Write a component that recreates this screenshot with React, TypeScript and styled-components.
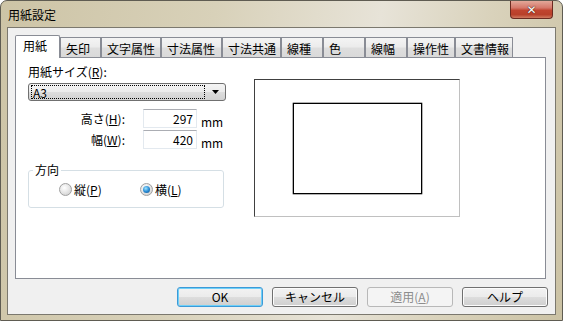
import React from 'react';
import styled, { createGlobalStyle } from 'styled-components';

const GlobalStyle = createGlobalStyle`
  html, body { margin: 0; padding: 0; background: #ffffff; }
  body {
    font-family: "Noto Sans CJK JP", "Noto Sans", sans-serif;
    font-size: 12px;
    color: #000;
  }
  * { box-sizing: border-box; }
`;

const Window = styled.div`
  width: 563px;
  height: 321px;
  display: flex;
  flex-direction: column;
  border: 1px solid #5f5c52;
  border-radius: 7px 7px 0 0;
  background: linear-gradient(100deg, #cdc4a6 0%, #d8d1b9 35%, #e7e3d8 62%, #d9d2bb 80%, #cbc2a4 100%);
  padding: 0 6px 5px 6px;
  overflow: hidden;
`;

const TitleBar = styled.div`
  height: 26px;
  flex: none;
  display: flex;
  align-items: flex-start;
`;

const TitleText = styled.div`
  margin-left: 1px;
  line-height: 28px;
  font-size: 12px;
  color: #000;
`;

const CloseButton = styled.div`
  margin-left: auto;
  margin-right: 3px;
  width: 43px;
  height: 18px;
  border: 1px solid #6b2a20;
  border-top: none;
  border-radius: 0 0 4px 4px;
  background: linear-gradient(180deg, #e3a899 0%, #d5786a 40%, #c0442f 55%, #b8402a 80%, #d07a60 100%);
  display: flex;
  align-items: center;
  justify-content: center;
  color: #fff;
  font-family: "DejaVu Sans", sans-serif;
  font-weight: bold;
  font-size: 12px;
  text-shadow: 0 0 1px #3a1a10, 0 0 1px #3a1a10;
`;

const Client = styled.div`
  flex: 1;
  display: flex;
  flex-direction: column;
  background: #f0f0f0;
  border: 1px solid #7b786e;
  padding: 7px 9px 7px 7px;
`;

const TabStrip = styled.div`
  height: 23px;
  display: flex;
  align-items: flex-end;
  margin-bottom: -1px;
  position: relative;
  z-index: 1;
`;

const Tab = styled.div<{ $w: number; $active?: boolean }>`
  width: ${(p) => p.$w}px;
  flex: none;
  border: 1px solid #898c95;
  border-bottom: none;
  white-space: nowrap;
  ${(p) =>
    p.$active
      ? `
    height: 23px;
    background: #ffffff;
    padding-left: 7px;
    line-height: 20px;
    border-radius: 2px 2px 0 0;
  `
      : `
    height: 20px;
    margin-bottom: 1px;
    background: linear-gradient(180deg, #f4f4f4 0%, #ececec 45%, #dedede 55%, #d9d9d9 100%);
    padding-left: 5px;
    padding-top: 1px;
    line-height: 19px;
  `}
`;

const Panel = styled.div`
  flex: 1;
  background: #ffffff;
  border: 1px solid #898c95;
  display: flex;
  padding: 7px 12px 0 12px;
`;

const LeftColumn = styled.div`
  width: 198px;
  display: flex;
  flex-direction: column;
`;

const FieldLabel = styled.div`
  line-height: 14px;
  height: 14px;
`;

const Select = styled.div`
  margin-top: 4px;
  height: 18px;
  border: 1px solid #707070;
  border-radius: 3px;
  background: linear-gradient(180deg, #f4f4f4 0%, #ebebeb 50%, #dddddd 51%, #d2d2d2 100%);
  display: flex;
  align-items: center;
  padding: 1px 0 1px 2px;
`;

const SelectValue = styled.div`
  flex: 1;
  height: 14px;
  line-height: 13px;
  border: 1px dotted #000;
  padding-left: 1px;
`;

const SelectArrow = styled.div`
  width: 20px;
  display: flex;
  justify-content: center;
  align-items: center;
`;

const DimRows = styled.div`
  margin-top: 8px;
  display: flex;
  flex-direction: column;
  gap: 2px;
`;

const DimRow = styled.div`
  height: 19px;
  display: flex;
  align-items: center;
`;

const DimLabel = styled.div`
  width: 97px;
  text-align: right;
  line-height: 14px;
`;

const NumInput = styled.div`
  margin-left: 18px;
  width: 54px;
  height: 19px;
  border: 1px solid #e3e9ef;
  border-top-color: #abadb3;
  background: #fff;
  text-align: right;
  padding-right: 3px;
  line-height: 17px;
`;

const Unit = styled.div`
  margin-left: 4px;
  align-self: flex-end;
  line-height: 14px;
  margin-bottom: -1px;
`;

const Group = styled.fieldset`
  margin: 14px 0 0 0;
  width: 196px;
  height: 45px;
  border: 1px solid #d5dfe5;
  border-radius: 3px;
  padding: 0;
  min-width: 0;
`;

const Legend = styled.legend`
  margin-left: 4px;
  padding: 0 2px;
  line-height: 14px;
`;

const RadioRow = styled.div`
  margin-top: 5px;
  padding-left: 30px;
  display: flex;
  align-items: center;
  height: 14px;
`;

const RadioItem = styled.div<{ $w: number }>`
  width: ${(p) => p.$w}px;
  display: flex;
  align-items: center;
  gap: 2px;
`;

const RadioCircle = styled.span<{ $checked?: boolean }>`
  width: 13px;
  height: 13px;
  border-radius: 50%;
  border: 1px solid #a0a0a0;
  background: radial-gradient(circle at 40% 35%, #ffffff 0%, #e8e8e8 45%, #c8c8c8 100%);
  display: flex;
  align-items: center;
  justify-content: center;
  flex: none;
  &::after {
    content: '';
    display: ${(p) => (p.$checked ? 'block' : 'none')};
    width: 7px;
    height: 7px;
    border-radius: 50%;
    background: radial-gradient(circle at 40% 35%, #9ee4ff 0%, #2c8ed6 50%, #0d4a86 100%);
  }
`;

const Preview = styled.div`
  margin-left: 28px;
  margin-top: 14px;
  width: 206px;
  height: 138px;
  border-top: 1px solid #404040;
  border-left: 1px solid #404040;
  border-right: 1px solid #c0c0c0;
  border-bottom: 1px solid #c0c0c0;
  display: flex;
  align-items: center;
  justify-content: center;
`;

const PaperRect = styled.div`
  width: 129px;
  height: 91px;
  border: 1px solid #000;
  box-shadow: 0 0 0 0.3px #000;
`;

const ButtonBar = styled.div`
  margin-top: 8px;
  margin-right: -2px;
  display: flex;
  justify-content: flex-end;
  gap: 9px;
`;

const Button = styled.div<{ $default?: boolean; $disabled?: boolean }>`
  width: 86px;
  height: 20px;
  border-radius: 3px;
  display: flex;
  align-items: center;
  justify-content: center;
  line-height: 14px;
  border: 1px solid ${(p) => (p.$default ? '#3c9ad8' : p.$disabled ? '#b8b8b8' : '#707070')};
  color: ${(p) => (p.$disabled ? '#8d8d8d' : '#000')};
  background: ${(p) =>
    p.$disabled
      ? '#f4f4f4'
      : 'linear-gradient(180deg, #f2f2f2 0%, #ebebeb 50%, #dddddd 51%, #cfcfcf 100%)'};
  box-shadow: ${(p) => (p.$default ? 'inset 0 0 0 1px #6fd0f8' : p.$disabled ? 'none' : 'inset 0 0 0 1px #fcfcfc')};
`;

const tabs: { label: string; w: number }[] = [
  { label: '用紙', w: 45 },
  { label: '矢印', w: 41 },
  { label: '文字属性', w: 60 },
  { label: '寸法属性', w: 61 },
  { label: '寸法共通', w: 59 },
  { label: '線種', w: 42 },
  { label: '色', w: 42 },
  { label: '線幅', w: 42 },
  { label: '操作性', w: 48 },
  { label: '文書情報', w: 58 },
];

export default function App() {
  return (
    <>
      <GlobalStyle />
      <Window>
        <TitleBar>
          <TitleText>用紙設定</TitleText>
          <CloseButton>✕</CloseButton>
        </TitleBar>
        <Client>
          <TabStrip>
            {tabs.map((t, i) => (
              <Tab key={t.label} $w={t.w} $active={i === 0}>
                {t.label}
              </Tab>
            ))}
          </TabStrip>
          <Panel>
            <LeftColumn>
              <FieldLabel>
                用紙サイズ(<u>R</u>):
              </FieldLabel>
              <Select>
                <SelectValue>A3</SelectValue>
                <SelectArrow>
                  <svg width="7" height="4" viewBox="0 0 7 4">
                    <path d="M0 0 H7 L3.5 4 Z" fill="#000" />
                  </svg>
                </SelectArrow>
              </Select>
              <DimRows>
                <DimRow>
                  <DimLabel>
                    高さ(<u>H</u>):
                  </DimLabel>
                  <NumInput>297</NumInput>
                  <Unit>mm</Unit>
                </DimRow>
                <DimRow>
                  <DimLabel>
                    幅(<u>W</u>):
                  </DimLabel>
                  <NumInput>420</NumInput>
                  <Unit>mm</Unit>
                </DimRow>
              </DimRows>
              <Group>
                <Legend>方向</Legend>
                <RadioRow>
                  <RadioItem $w={81}>
                    <RadioCircle />
                    <span>
                      縦(<u>P</u>)
                    </span>
                  </RadioItem>
                  <RadioItem $w={60}>
                    <RadioCircle $checked />
                    <span>
                      横(<u>L</u>)
                    </span>
                  </RadioItem>
                </RadioRow>
              </Group>
            </LeftColumn>
            <Preview>
              <PaperRect />
            </Preview>
          </Panel>
          <ButtonBar>
            <Button $default>OK</Button>
            <Button>キャンセル</Button>
            <Button $disabled>
              適用(<u>A</u>)
            </Button>
            <Button>ヘルプ</Button>
          </ButtonBar>
        </Client>
      </Window>
    </>
  );
}
